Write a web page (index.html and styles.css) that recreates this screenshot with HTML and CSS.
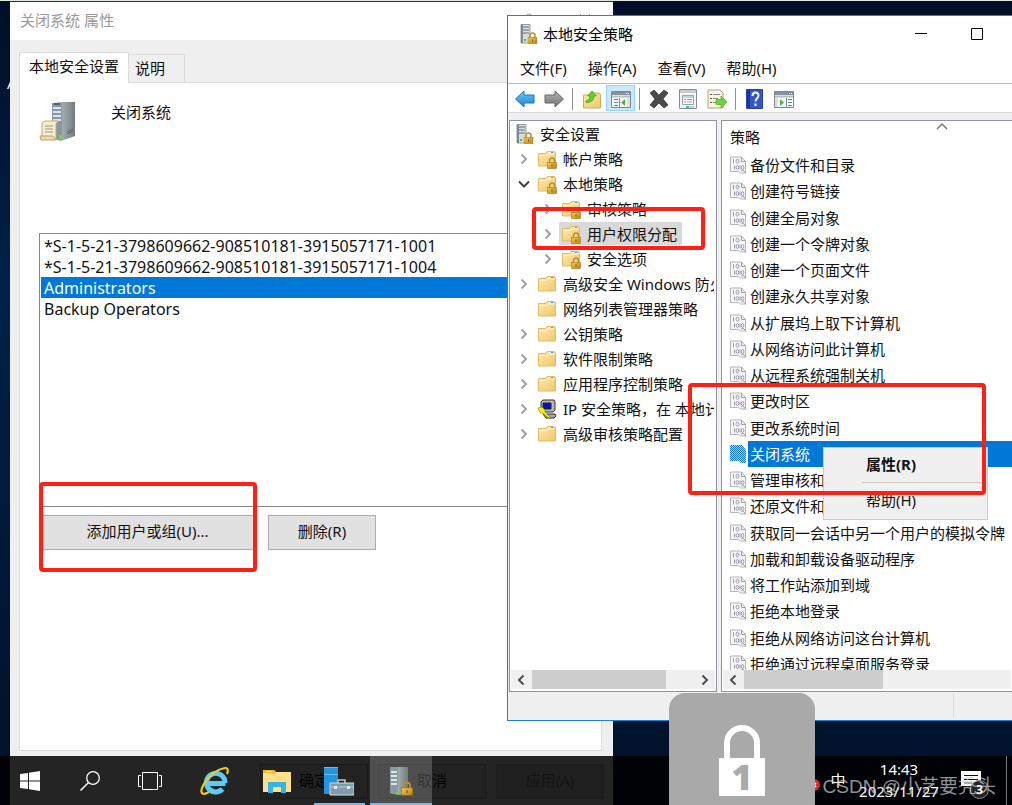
FILE: index.html
```html
<!DOCTYPE html>
<html lang="zh-CN">
<head>
    <meta charset="UTF-8">
    <meta name="viewport" content="width=device-width, initial-scale=1.0">
    <title>本地安全策略</title>
    <link rel="stylesheet" href="styles.css">
</head>
<body>
    <!-- Shared icons -->
    <svg class="sprite" aria-hidden="true">
        <defs>
            <linearGradient id="gFolder" x1="0" y1="0" x2="1" y2="1">
                <stop offset="0" stop-color="#ffeab0"/><stop offset="1" stop-color="#efc767"/>
            </linearGradient>
            <linearGradient id="gMetal" x1="0" y1="0" x2="1" y2="0">
                <stop offset="0" stop-color="#c9d1d4"/><stop offset="1" stop-color="#727c80"/>
            </linearGradient>
            <linearGradient id="gGold" x1="0" y1="0" x2="1" y2="1">
                <stop offset="0" stop-color="#f3cd55"/><stop offset="1" stop-color="#b9800f"/>
            </linearGradient>
            <linearGradient id="gBlue" x1="0" y1="0" x2="0" y2="1">
                <stop offset="0" stop-color="#6ccbfb"/><stop offset="1" stop-color="#1482d2"/>
            </linearGradient>
            <linearGradient id="gGrey" x1="0" y1="0" x2="0" y2="1">
                <stop offset="0" stop-color="#b4b4b4"/><stop offset="1" stop-color="#707070"/>
            </linearGradient>
        </defs>
        <symbol id="padlock" viewBox="0 0 10 12">
            <path d="M2.500 6V3.500a2.500 2.500 0 0 1 5 0V6" fill="none" stroke="#b98f2c" stroke-width="1.500"/>
            <rect x=".5" y="5.500" width="9" height="6" fill="url(#gGold)" stroke="#a8780f" stroke-width=".6"/>
            <path d="M5 7.500v2" stroke="#7d5606" stroke-width="1"/>
        </symbol>
        <symbol id="folder" viewBox="0 0 20 20">
            <path d="M1.500 17V4.500h7l1.500-2h7.500L18.500 4v13z" fill="url(#gFolder)" stroke="#dfbb68"/>
            <path d="M11.500 3.500h4" stroke="#fff"/><path d="M14 3.500h2" stroke="#3d9be0"/>
            <path d="M2.500 6.500h7l1.500-1.500h6.500" fill="none" stroke="#fff4cf"/>
        </symbol>
        <symbol id="folderLock" viewBox="0 0 20 20">
            <use href="#folder" width="20" height="20"/>
            <use href="#padlock" x="10" y="8" width="10" height="12"/>
        </symbol>
        <symbol id="serverLock" viewBox="0 0 18 20">
            <path d="M1 .5h9v18.500H1z" fill="#d5dde1" stroke="#939da2"/>
            <path d="M1 .5h2v18.500H1z" fill="#7e898f"/>
            <path d="M3 3h6M3 6h6M3 9h6" stroke="#63727a"/>
            <path d="M4 16h2" stroke="#58c03c" stroke-width="2"/>
            <use href="#padlock" x="7.500" y="8" width="10" height="12"/>
        </symbol>
        <symbol id="policy" viewBox="0 0 18 18">
            <path d="M1.500 1v14.500h8l2 1.500h5V5.500l-4-4.500z" fill="#f7f7f7" stroke="#b4b4b4"/>
            <path d="M12.500 1v4.500h4M12 15l2-1 3 3.500" fill="none" stroke="#a0a0a0"/>
            <path d="M4.500 3v4.500M11 9.500v4M5.500 9.500v4" stroke="#9a97b2"/>
            <ellipse cx="8.500" cy="5.200" rx="1.500" ry="2" fill="none" stroke="#9a97b2"/>
            <ellipse cx="8.400" cy="11.500" rx="1.300" ry="2" fill="none" stroke="#9a97b2"/>
            <ellipse cx="13.600" cy="11.500" rx="1.200" ry="2" fill="none" stroke="#9a97b2"/>
        </symbol>
        <symbol id="ipsec" viewBox="0 0 20 20">
            <path d="M4 3l2-2h11l1 2v8l-2 2H4z" fill="#b9b9b9" stroke="#333"/>
            <path d="M6 4h8v6H6z" fill="#0612c8" stroke="#222"/>
            <path d="M6 15h12l1 2-2 2H9z" fill="#a7a7a7" stroke="#333"/>
            <path d="M1 9l4-1 3 3v2l6 6-3-.5-5-4-3-1z" fill="#fff000" stroke="#837900" stroke-width=".6"/>
        </symbol>
        <symbol id="closed" viewBox="0 0 10 12"><path d="M2.500 1.500L7 6l-4.500 4.500" fill="none" stroke="#a0a0a0" stroke-width="2"/></symbol>
        <symbol id="opened" viewBox="0 0 12 10"><path d="M1 2.500L6 7.500l5-5" fill="none" stroke="#404040" stroke-width="2"/></symbol>
        <symbol id="chevLeft" viewBox="0 0 10 12"><path d="M7.500 1.500L3 6l4.500 4.500" fill="none" stroke="#505050" stroke-width="2"/></symbol>
        <symbol id="chevRight" viewBox="0 0 10 12"><path d="M2.500 1.500L7 6l-4.500 4.500" fill="none" stroke="#505050" stroke-width="2"/></symbol>
    </svg>

    <div class="desktop">
        <span class="desktop-label">A</span>

        <!-- Properties dialog -->
        <section class="window properties">
            <header class="prop-title">
                <h1>关闭系统 属性</h1>
                <div class="prop-controls">
                    <button type="button" aria-label="帮助"><svg width="12" height="14" viewBox="0 0 12 14"><path d="M3 4c0-4 6-4 6 0 0 3-3 2-3 6M6 12v2" fill="none" stroke="#999"/></svg></button>
                    <button type="button" aria-label="关闭"><svg width="12" height="12" viewBox="0 0 12 12"><path d="M1 1l10 10M11 1L1 11" stroke="#999"/></svg></button>
                </div>
            </header>
            <div class="prop-body">
                <div class="tabs">
                    <button type="button" class="tab active">本地安全设置</button>
                    <button type="button" class="tab">说明</button>
                </div>
                <div class="tab-panel">
                    <div class="policy-head">
                        <svg width="38" height="42" viewBox="0 0 38 42">
                            <path d="M13 2l9-1h14v34l-14 5-9-2z" fill="url(#gMetal)"/>
                            <path d="M13 2h10v37l-10-1z" fill="#8897a5"/>
                            <path d="M14 7h8M14 11h8M14 15h8M14 19h8" stroke="#dbe4ea" stroke-width="2"/>
                            <path d="M15 3h6" stroke="#27333b"/>
                            <path d="M28 31l6-3M28 33l6-3" stroke="#59636a"/>
                            <path d="M20 36h3" stroke="#70dd20" stroke-width="4"/>
                            <path d="M3 22l3-2h13l-2 3v15H3z" fill="#f9edcc" stroke="#c3a96f"/>
                            <path d="M1 35h13l3 4H2z" fill="#eedcae" stroke="#bba167"/>
                            <path d="M6 25h8M6 28h8M6 31h8" stroke="#91939c"/>
                        </svg>
                        <label for="members">关闭系统</label>
                    </div>
                    <select id="members" class="members" size="12">
                        <option>*S-1-5-21-3798609662-908510181-3915057171-1001</option>
                        <option>*S-1-5-21-3798609662-908510181-3915057171-1004</option>
                        <option selected>Administrators</option>
                        <option>Backup Operators</option>
                    </select>
                    <div class="member-actions">
                        <button type="button" class="btn add">添加用户或组(U)...</button>
                        <button type="button" class="btn">删除(R)</button>
                    </div>
                </div>
                <footer class="dialog-actions">
                    <button type="button" class="btn">确定</button>
                    <button type="button" class="btn">取消</button>
                    <button type="button" class="btn" disabled>应用(A)</button>
                </footer>
            </div>
        </section>

        <!-- Local security policy console -->
        <section class="window console">
            <header class="console-title">
                <svg width="18" height="20"><use href="#serverLock"/></svg>
                <h2>本地安全策略</h2>
                <div class="console-controls">
                    <button type="button" aria-label="最小化"><svg width="12" height="12"><path d="M0 5.500h12" stroke="#000"/></svg></button>
                    <button type="button" aria-label="最大化"><svg width="12" height="12"><path d="M.5.500h11v11H.5z" fill="none" stroke="#000"/></svg></button>
                </div>
            </header>
            <nav class="menubar">
                <button type="button">文件(F)</button>
                <button type="button">操作(A)</button>
                <button type="button">查看(V)</button>
                <button type="button">帮助(H)</button>
            </nav>
            <div class="toolbar">
                <button type="button" aria-label="后退"><svg width="20" height="18" viewBox="0 0 20 18"><path d="M.5 9L9 1v4h10v8H9v4z" fill="url(#gBlue)" stroke="#2274ae"/></svg></button>
                <button type="button" aria-label="前进"><svg width="20" height="18" viewBox="0 0 20 18"><path d="M19.500 9L11 1v4H1v8h10v4z" fill="url(#gGrey)" stroke="#686868"/></svg></button>
                <span class="sep"></span>
                <button type="button" aria-label="向上"><svg width="20" height="20" viewBox="0 0 20 20"><path d="M1.500 19V6h8l1-2h7l1 2v13z" fill="url(#gFolder)" stroke="#d0a955"/><path d="M4 12c3-1 4-3 4-5H5.500L10 2l4.500 5H12c0 4-3 7-8 6.500z" fill="#61cf32" stroke="#399f1a" stroke-width=".7"/></svg></button>
                <button type="button" class="on" aria-label="控制台树"><svg width="20" height="18" viewBox="0 0 20 18"><path d="M.5 1.500h19v16H.5z" fill="#fff" stroke="#7d8790"/><path d="M1 2h18v3H1z" fill="#87929d"/><path d="M1 6.500h18" stroke="#b5bdc5" stroke-width="2"/><path d="M15 3.500h1M17 3.500h1" stroke="#fff"/><path d="M8.500 8v9" stroke="#7d8790"/><path d="M3 9.500h4M3 12.500h4M3 15.500h4" stroke="#4e86bb"/><path d="M14 9v7l-4-3.500z" fill="#4db52b"/><path d="M16 8h3v9h-3z" fill="#dce0e4"/></svg></button>
                <span class="sep"></span>
                <button type="button" aria-label="删除"><svg width="20" height="20" viewBox="0 0 20 20"><path d="M1 4l4-3 5 5 5-5 4 3-5 6 5 6-4 3-5-5-5 5-4-3 5-6z" fill="#4a4a4a" stroke="#222" stroke-width=".6"/></svg></button>
                <button type="button" aria-label="属性"><svg width="20" height="20" viewBox="0 0 20 20"><path d="M1.500.500h17v19h-17z" fill="#f6f6f6" stroke="#858b92"/><path d="M2 1h16v3H2z" fill="#c7ccd1"/><path d="M4.500 6.500h11v9h-11z" fill="#fff" stroke="#9aa3ac"/><path d="M5 8h10M6 10.500h2M9 10.500h5M6 13h2M9 13h5" stroke="#8e9dac"/><path d="M8 18h3" stroke="#39bfd9" stroke-width="2"/><path d="M12 18h4" stroke="#a2a2a2"/></svg></button>
                <button type="button" aria-label="导出列表"><svg width="20" height="20" viewBox="0 0 20 20"><path d="M1 1h12l3 3v15H1z" fill="#fff8d9" stroke="#a7a18a"/><path d="M3 5.500h2M3 9.500h2M3 13.500h2" stroke="#555"/><path d="M6 5.500h7M6 9.500h5M6 13.500h5" stroke="#8382a4"/><path d="M9 10.500h5V7l6 6-6 6v-3.500H9z" fill="#6bd43b" stroke="#55a72f" stroke-width=".7"/></svg></button>
                <span class="sep"></span>
                <button type="button" aria-label="帮助主题"><svg width="17" height="20" viewBox="0 0 17 20"><path d="M.5.500h16v19H.5z" fill="#3855c8" stroke="#2440a3"/><path d="M1 1h3v18H1z" fill="#213794"/><path d="M6.500 7c0-4.500 6-4.500 6-.5 0 3-3 2.500-3 6M9.500 14.500v2.500" fill="none" stroke="#fff" stroke-width="2"/></svg></button>
                <button type="button" aria-label="操作窗格"><svg width="20" height="18" viewBox="0 0 20 18"><path d="M.5 1.500h19v16H.5z" fill="#fff" stroke="#7d8790"/><path d="M1 2h18v3H1z" fill="#87929d"/><path d="M1 6.500h18" stroke="#b5bdc5" stroke-width="2"/><path d="M15 3.500h1M17 3.500h1" stroke="#fff"/><path d="M12.500 8v9" stroke="#7d8790"/><path d="M14 9.500h4M14 12.500h4M14 15.500h4" stroke="#4e86bb"/><path d="M6 9v7l4-3.500z" fill="#4db52b"/><path d="M1 8h3v9H1z" fill="#dce0e4"/></svg></button>
            </div>

            <div class="panes">
                <div class="pane tree-pane">
                    <ul class="tree">
                        <li class="root"><span class="node"><svg width="18" height="20"><use href="#serverLock"/></svg>安全设置</span></li>
                        <li><i><svg width="10" height="12"><use href="#closed"/></svg></i><span class="node"><svg width="20" height="20"><use href="#folderLock"/></svg>帐户策略</span></li>
                        <li><i><svg width="12" height="10"><use href="#opened"/></svg></i><span class="node"><svg width="20" height="20"><use href="#folderLock"/></svg>本地策略</span></li>
                        <li class="sub"><i><svg width="10" height="12"><use href="#closed"/></svg></i><span class="node"><svg width="20" height="20"><use href="#folderLock"/></svg>审核策略</span></li>
                        <li class="sub"><i><svg width="10" height="12"><use href="#closed"/></svg></i><span class="node selected"><svg width="20" height="20"><use href="#folderLock"/></svg>用户权限分配</span></li>
                        <li class="sub"><i><svg width="10" height="12"><use href="#closed"/></svg></i><span class="node"><svg width="20" height="20"><use href="#folderLock"/></svg>安全选项</span></li>
                        <li><i><svg width="10" height="12"><use href="#closed"/></svg></i><span class="node"><svg width="20" height="20"><use href="#folder"/></svg>高级安全 Windows 防火墙</span></li>
                        <li><i></i><span class="node"><svg width="20" height="20"><use href="#folder"/></svg>网络列表管理器策略</span></li>
                        <li><i><svg width="10" height="12"><use href="#closed"/></svg></i><span class="node"><svg width="20" height="20"><use href="#folder"/></svg>公钥策略</span></li>
                        <li><i><svg width="10" height="12"><use href="#closed"/></svg></i><span class="node"><svg width="20" height="20"><use href="#folder"/></svg>软件限制策略</span></li>
                        <li><i><svg width="10" height="12"><use href="#closed"/></svg></i><span class="node"><svg width="20" height="20"><use href="#folder"/></svg>应用程序控制策略</span></li>
                        <li><i><svg width="10" height="12"><use href="#closed"/></svg></i><span class="node"><svg width="20" height="20"><use href="#ipsec"/></svg>IP 安全策略，在 本地计算机</span></li>
                        <li><i><svg width="10" height="12"><use href="#closed"/></svg></i><span class="node"><svg width="20" height="20"><use href="#folder"/></svg>高级审核策略配置</span></li>
                    </ul>
                    <div class="scrollbar">
                        <svg width="10" height="12"><use href="#chevLeft"/></svg>
                        <div class="track"><div class="thumb tree-thumb"></div></div>
                        <svg width="10" height="12"><use href="#chevRight"/></svg>
                    </div>
                </div>

                <div class="pane list-pane">
                    <div class="column-head">策略
                        <svg class="sort" width="12" height="8"><path d="M1 7l5-5 5 5" fill="none" stroke="#777" stroke-width="1.500"/></svg>
                    </div>
                    <div class="list-view">
                        <ul class="policies">
                            <li><svg width="18" height="18"><use href="#policy"/></svg><span>备份文件和目录</span></li>
                            <li><svg width="18" height="18"><use href="#policy"/></svg><span>创建符号链接</span></li>
                            <li><svg width="18" height="18"><use href="#policy"/></svg><span>创建全局对象</span></li>
                            <li><svg width="18" height="18"><use href="#policy"/></svg><span>创建一个令牌对象</span></li>
                            <li><svg width="18" height="18"><use href="#policy"/></svg><span>创建一个页面文件</span></li>
                            <li><svg width="18" height="18"><use href="#policy"/></svg><span>创建永久共享对象</span></li>
                            <li><svg width="18" height="18"><use href="#policy"/></svg><span>从扩展坞上取下计算机</span></li>
                            <li><svg width="18" height="18"><use href="#policy"/></svg><span>从网络访问此计算机</span></li>
                            <li><svg width="18" height="18"><use href="#policy"/></svg><span>从远程系统强制关机</span></li>
                            <li><svg width="18" height="18"><use href="#policy"/></svg><span>更改时区</span></li>
                            <li><svg width="18" height="18"><use href="#policy"/></svg><span>更改系统时间</span></li>
                            <li class="selected"><svg width="18" height="18" viewBox="0 0 18 18">
                                <defs><pattern id="dither" width="2" height="2" patternUnits="userSpaceOnUse"><path d="M0 0h2v2H0z" fill="#a9cff0"/><path d="M0 0h1v1H0zM1 1h1v1H1z" fill="#1478cb"/></pattern></defs>
                                <path d="M1 0v16h9l2 2h5V5l-4-5z" fill="url(#dither)"/></svg><span>关闭系统</span></li>
                            <li><svg width="18" height="18"><use href="#policy"/></svg><span>管理审核和安全日志</span></li>
                            <li><svg width="18" height="18"><use href="#policy"/></svg><span>还原文件和目录</span></li>
                            <li><svg width="18" height="18"><use href="#policy"/></svg><span>获取同一会话中另一个用户的模拟令牌</span></li>
                            <li><svg width="18" height="18"><use href="#policy"/></svg><span>加载和卸载设备驱动程序</span></li>
                            <li><svg width="18" height="18"><use href="#policy"/></svg><span>将工作站添加到域</span></li>
                            <li><svg width="18" height="18"><use href="#policy"/></svg><span>拒绝本地登录</span></li>
                            <li><svg width="18" height="18"><use href="#policy"/></svg><span>拒绝从网络访问这台计算机</span></li>
                            <li><svg width="18" height="18"><use href="#policy"/></svg><span>拒绝通过远程桌面服务登录</span></li>
                        </ul>
                    </div>
                    <div class="scrollbar">
                        <svg width="10" height="12"><use href="#chevLeft"/></svg>
                        <div class="track"><div class="thumb list-thumb"></div></div>
                    </div>
                </div>
            </div>
            <footer class="statusbar"><span></span></footer>
        </section>

        <div class="context-menu">
            <button type="button" class="default">属性(R)</button>
            <hr>
            <button type="button">帮助(H)</button>
        </div>

        <!-- Taskbar -->
        <footer class="taskbar">
            <button type="button" aria-label="开始"><svg width="20" height="20" viewBox="0 0 20 20"><path d="M0 3l8-1v7.500H0zM9 1.800L20 0v9.500H9zM0 10.500h8V18l-8-1zM9 10.500h11V20L9 18.300z" fill="#fff"/></svg></button>
            <button type="button" aria-label="搜索"><svg width="20" height="20" viewBox="0 0 20 20"><circle cx="13" cy="7" r="6.300" fill="none" stroke="#fff" stroke-width="1.300"/><path d="M8.500 11.500L.5 19.500" stroke="#fff" stroke-width="1.500"/></svg></button>
            <button type="button" aria-label="任务视图"><svg width="24" height="18" viewBox="0 0 24 18"><path d="M4.500.500h15v17h-15zM3 3.500H.5v11H3M21 3.500h2.500v11H21" fill="none" stroke="#fff"/></svg></button>
            <div class="apps">
                <button type="button" aria-label="Internet Explorer"><svg width="30" height="30" viewBox="0 0 30 30">
                    <path d="M25.500 17.500H9M25 17a9.300 9.300 0 1 0-2.500 6" fill="none" stroke="#5accf7" stroke-width="5"/>
                    <path d="M27 8c2-5 0-7-4-5.500C15 4 5 14 2 22c-2 6 1 7.500 7 4" fill="none" stroke="#f5c81c" stroke-width="2.200"/>
                </svg></button>
                <button type="button" aria-label="文件资源管理器"><svg width="28" height="24" viewBox="0 0 28 24"><path d="M0 23V1h11l2 2h15v20z" fill="#ffe08a"/><path d="M0 4V1h11l2 3z" fill="#f3b61f"/><path d="M3 2.500h6" stroke="#fff"/><path d="M5 24V13h18v11h-5v-6h-8v6z" fill="#36b3e8"/></svg></button>
                <button type="button" class="running" aria-label="服务器管理器"><svg width="30" height="30" viewBox="0 0 30 30"><path d="M0 1h14v27H0z" fill="#2394e0"/><path d="M0 8.500h14M0 1.500h14" stroke="#6dbcf2"/><path d="M14 17v-3h7v3" fill="none" stroke="#bcc9d0" stroke-width="1.500"/><path d="M6 17h24v12H6z" fill="#7e9cad" stroke="#d5dde2"/><path d="M6 21h24" stroke="#bdccd4"/><path d="M10 20h3v3h-3zM23 20h3v3h-3z" fill="#e4eaee"/></svg></button>
                <button type="button" class="running active" aria-label="本地安全策略"><svg width="24" height="30" viewBox="0 0 24 30"><path d="M1 1h18v27l-9 1-9-2z" fill="url(#gMetal)"/><path d="M1 1h8v28l-8-2z" fill="#8899a4"/><path d="M2 6h6M2 10h6M2 14h6M2 18h6" stroke="#dce5ea" stroke-width="2"/><path d="M7 27h3" stroke="#6fd428" stroke-width="2"/><use href="#padlock" x="12" y="15" width="12" height="15"/></svg></button>
            </div>
            <div class="tray">
                <svg class="alert" width="12" height="12"><circle cx="6" cy="6" r="6" fill="#e0282e"/><path d="M4 4l4 4M8 4L4 8" stroke="#fff" stroke-width="1.500"/></svg>
                <button type="button" class="ime">中</button>
                <div class="clock"><time>14:43</time><time>2023/11/27</time></div>
                <button type="button" class="notify" aria-label="3 个新通知"><svg width="20" height="20" viewBox="0 0 20 20"><path d="M0 0h20v15h-5v5l-5-5H0z" fill="#fff"/><path d="M3 4.500h14M3 8.500h14M3 12h8" stroke="#111"/></svg><b>3</b></button>
            </div>
        </footer>

        <div class="lock-badge">
            <svg width="46" height="72" viewBox="0 0 46 72"><path d="M8 36V18a15 15 0 0 1 30 0v18" fill="none" stroke="#fff" stroke-width="6"/><path d="M0 33h46v38H0z" fill="#fff"/></svg>
            <span>1</span>
        </div>

        <div class="mark mark-add"></div>
        <div class="mark mark-tree"></div>
        <div class="mark mark-menu"></div>
        <span class="watermark">CSDN @小艺要秃头</span>
    </div>
</body>
</html>
```

FILE: styles.css
```css
* {
    box-sizing: border-box;
}
body {
    margin: 0;
    font-family: "Noto Sans", "Noto Sans CJK SC", sans-serif;
    font-size: 15px;
    line-height: 20px;
    color: #111;
}
button {
    font: inherit;
    color: inherit;
    background: none;
    border: none;
    padding: 0;
}
svg {
    display: block;
    flex: none;
}
ul {
    list-style: none;
    margin: 0;
    padding: 0;
}
h1, h2 {
    margin: 0;
    font-size: 15px;
    font-weight: 400;
}
.sprite {
    position: absolute;
    width: 0;
    height: 0;
}
.desktop {
    position: relative;
    height: 100vh;
    overflow: hidden;
    border-top: 1px solid #dfe6e4;
    background: linear-gradient(#000f26, #002149 35%, #001a3a 65%, #001128);
}
.desktop-label {
    position: absolute;
    left: 7px;
    top: 72px;
    color: #fff;
}
.window {
    position: absolute;
    display: flex;
    flex-direction: column;
}

/* properties dialog */
.properties {
    left: 10px;
    top: 0;
    bottom: 0;
    width: 603px;
    background: #efefef;
    border-top: 1px solid #26333c;
}
.prop-title {
    display: flex;
    align-items: center;
    justify-content: space-between;
    height: 38px;
    padding: 0 0 2px 10px;
    background: #fff;
    color: #999;
}
.prop-controls {
    display: flex;
}
.prop-controls button {
    display: flex;
    justify-content: center;
    width: 56px;
}
.prop-body {
    flex: 1;
    display: flex;
    flex-direction: column;
    padding: 12px 9px 6px;
}
.tabs {
    display: flex;
    align-items: flex-end;
}
.tab {
    height: 28px;
    padding: 0 19px 2px 6px;
    border: 1px solid #dcdcdc;
    border-left: none;
    border-bottom: none;
}
.tab.active {
    height: 31px;
    margin-bottom: -1px;
    padding: 0 9px 4px;
    border-left: 1px solid #dcdcdc;
    background: #fff;
    z-index: 1;
}
.tab-panel {
    flex: 1;
    width: 583px;
    padding: 16px 19px;
    border: 1px solid #dcdcdc;
    background: #fff;
}
.policy-head {
    display: flex;
    gap: 34px;
    height: 134px;
}
.policy-head svg {
    margin-top: 2px;
}
.policy-head label {
    margin-top: 3px;
}
.members {
    display: block;
    width: 100%;
    height: 274px;
    padding: 1px;
    border: 1px solid #828790;
    border-radius: 0;
    background: #fff;
    font: inherit;
    font-size: 16px;
    outline: none;
    overflow: hidden;
}
.members option {
    height: 21px;
    min-height: 21px;
    padding: 0 3px;
    line-height: 21px;
    color: #111;
}
.members option:checked {
    background: #0078d7 linear-gradient(#0078d7, #0078d7);
    color: #fff;
}
.member-actions {
    display: flex;
    gap: 12px;
    margin-top: 8px;
}
.btn {
    width: 108px;
    height: 35px;
    padding-bottom: 4px;
    border: 1px solid #adadad;
    background: #e1e1e1;
}
.btn.add {
    width: 217px;
}
.btn:disabled {
    color: #888;
    border-color: #bfbfbf;
    background: #ccc;
}
.dialog-actions {
    display: flex;
    justify-content: flex-end;
    gap: 10px;
    padding-top: 13px;
}

/* console */
.console {
    left: 507px;
    right: 0;
    top: 14px;
    bottom: 84px;
    border: 1px solid #1883d7;
    border-right: none;
    background: #f0f0f0;
}
.console-title {
    display: flex;
    align-items: center;
    gap: 5px;
    height: 37px;
    padding: 0 7px 2px 12px;
    background: #fff;
    color: #000;
}
.console-controls {
    display: flex;
    margin-left: auto;
}
.console-controls button {
    display: flex;
    justify-content: center;
    width: 56px;
}
.menubar {
    display: flex;
    gap: 1px;
    height: 31px;
    padding-left: 2px;
    border-bottom: 1px solid #b8bcc0;
    background: #fff;
}
.menubar button {
    padding: 0 10px;
}
.toolbar {
    display: flex;
    height: 29px;
    padding-left: 2px;
    border-bottom: 1px solid #dadada;
    background: #fff;
}
.toolbar button {
    display: flex;
    align-items: center;
    justify-content: center;
    width: 29px;
    padding-top: 2px;
}
.toolbar .on {
    margin: 1px 0;
    padding-top: 1px;
    background: #cce8ff;
    border: 1px solid #99d1ff;
}
.sep {
    width: 1px;
    margin: 4px 4px 2px;
    background: #909090;
}
.panes {
    flex: 1;
    display: grid;
    grid-template-columns: 208px 1fr;
    gap: 4px;
    min-height: 0;
    padding: 7px 0 0 1px;
}
.pane {
    display: flex;
    flex-direction: column;
    min-width: 0;
    min-height: 0;
    overflow: hidden;
    border: 1px solid #8e939c;
    background: #fff;
}
.list-pane {
    border-right: none;
}
.tree {
    flex: 1;
    margin-right: 2px;
    padding-left: 2px;
    overflow: hidden;
    white-space: nowrap;
}
.tree li {
    display: flex;
    align-items: center;
    height: 25px;
}
.tree .root {
    padding-left: 2px;
}
.tree .sub {
    padding-left: 24px;
}
.tree i {
    flex: none;
    display: flex;
    justify-content: center;
    width: 23px;
}
.node {
    flex: none;
    display: flex;
    align-items: center;
    gap: 6px;
    height: 23px;
    padding: 0 5px 0 2px;
}
.node.selected {
    background: #d9d9d9;
}
.scrollbar {
    display: flex;
    align-items: center;
    height: 19px;
    margin: 0 1px 2px;
    padding: 0 5px;
    gap: 6px;
    background: #f0f0f0;
}
.track {
    flex: 1;
    height: 100%;
}
.thumb {
    height: 100%;
    background: #cdcdcd;
}
.tree-thumb {
    width: 134px;
}
.list-thumb {
    width: 139px;
}
.column-head {
    position: relative;
    height: 31px;
    padding: 6px 8px;
}
.sort {
    position: absolute;
    left: 214px;
    top: 1px;
}
.list-view {
    flex: 1;
    min-height: 0;
    overflow: hidden;
}
.policies {
    display: flex;
    flex-direction: column;
    height: calc(100% + 7px);
}
.policies li {
    flex: 1;
    display: flex;
    align-items: stretch;
    padding-left: 7px;
    white-space: nowrap;
}
.policies svg {
    align-self: center;
}
.policies span {
    flex: 1;
    display: flex;
    align-items: center;
    margin-left: 1px;
    padding-left: 2px;
}
.policies .selected span {
    background: #0078d7;
    color: #fff;
}
.statusbar {
    display: flex;
    justify-content: flex-end;
    height: 28px;
}
.statusbar span {
    width: 59px;
    margin: 2px 0;
    border-left: 1px solid #d7d7d7;
}
.context-menu {
    position: absolute;
    left: 823px;
    top: 446px;
    display: flex;
    flex-direction: column;
    width: 165px;
    padding: 2px 2px 6px;
    border: 1px solid #ccc;
    background: #f0f0f0;
}
.context-menu button {
    height: 27px;
    padding-left: 40px;
    text-align: left;
}
.context-menu .default {
    font-weight: 700;
}
.context-menu hr {
    margin: 5px 0 3px 36px;
    border: none;
    border-top: 1px solid #ccc;
}

/* taskbar */
.taskbar {
    position: absolute;
    left: 0;
    right: 0;
    bottom: 0;
    display: flex;
    height: 49px;
    background: rgba(0, 0, 0, 0.85);
    color: #fff;
}
.taskbar button {
    display: flex;
    align-items: center;
    justify-content: center;
    width: 60px;
}
.apps {
    display: flex;
    padding-left: 4px;
}
.taskbar .apps button {
    width: 62px;
}
.running {
    background: linear-gradient(#76b9ed, #76b9ed) bottom / 51px 2px no-repeat;
}
.running.active {
    background-color: rgba(255, 255, 255, 0.2);
    background-size: 100% 2px;
}
.tray {
    display: flex;
    align-items: center;
    margin-left: auto;
    padding-right: 5px;
}
.alert {
    margin-top: 8px;
}
.taskbar .ime {
    width: 36px;
    padding-bottom: 2px;
}
.clock {
    display: flex;
    flex-direction: column;
    align-items: center;
    gap: 2px;
    width: 86px;
    padding-bottom: 2px;
}
.taskbar .notify {
    position: relative;
    justify-content: flex-start;
    width: 65px;
    height: 49px;
    padding-left: 19px;
    border-right: 1px solid #777;
}
.notify b {
    position: absolute;
    left: 28px;
    top: 24px;
    width: 19px;
    height: 19px;
    border: 1px solid #888;
    border-radius: 50%;
    background: #222;
    font-size: 13px;
    line-height: 17px;
}
.lock-badge {
    position: absolute;
    left: 669px;
    bottom: 0;
    display: grid;
    justify-items: center;
    width: 146px;
    height: 112px;
    padding-top: 32px;
    border-radius: 16px 16px 0 0;
    background: #a9a9a9;
}
.lock-badge svg, .lock-badge span {
    grid-area: 1 / 1;
}
.lock-badge span {
    padding-top: 34px;
    color: #a9a9a9;
    font-family: "Open Sans", sans-serif;
    font-size: 36px;
    font-weight: 800;
    line-height: 36px;
}

/* red highlights */
.mark {
    position: absolute;
    border: 4px solid #ff1f14;
    border-radius: 4px;
}
.mark-add {
    left: 39px;
    top: 481px;
    width: 218px;
    height: 90px;
}
.mark-tree {
    left: 532px;
    top: 206px;
    width: 173px;
    height: 43px;
}
.mark-menu {
    left: 688px;
    top: 382px;
    width: 298px;
    height: 112px;
}
.watermark {
    position: absolute;
    right: 16px;
    bottom: 8px;
    font-family: "Liberation Sans", "Noto Sans CJK SC", sans-serif;
    font-size: 19px;
    color: rgba(210, 210, 210, 0.7);
}
```
